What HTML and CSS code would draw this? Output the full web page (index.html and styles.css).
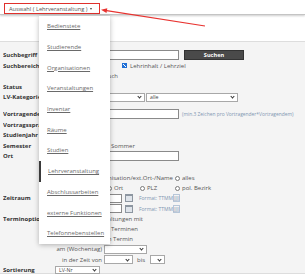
FILE: index.html
```html
<!DOCTYPE html>
<html>

<head>
    <link rel="stylesheet" href="styles.css">
</head>

<body>
    <div class="topbar">
        <div class="auswahl">Auswahl ( Lehrveranstaltung ) <span class="caret"></span></div>
    </div>

    <div class="panel">
        <div class="row">
            <div class="label">Suchbegriff</div>
            <div class="value">
                <span class="input w124"></span>
                <button class="btn">Suchen</button>
            </div>
        </div>
        <div class="row">
            <div class="label">Suchbereich</div>
            <div class="value">
                <span class="opt w67"><input type="checkbox" checked></span>
                <span class="opt"><input type="checkbox" checked>Lehrinhalt / Lehrziel</span>
            </div>
        </div>
        <div class="row">
            <div class="label"></div>
            <div class="value end w63">
                <span class="opt">Englisch</span>
            </div>
        </div>
        <div class="row">
            <div class="label">Status</div>
            <div class="value"><span class="select w45"></span></div>
        </div>
        <div class="row">
            <div class="label">LV-Kategorie</div>
            <div class="value">
                <span class="select w90"></span>
                <span class="select w92 ml1">alle</span>
            </div>
        </div>

        <div class="spacer s1"></div>

        <div class="row">
            <div class="label">Vortragende</div>
            <div class="value">
                <span class="input w124"></span>
                <span class="hint">(min.3 Zeichen pro Vortragender*Vortragendem)</span>
            </div>
        </div>
        <div class="row">
            <div class="label">Vortragssprache</div>
            <div class="value"><span class="select w45"></span></div>
        </div>
        <div class="row">
            <div class="label">Studienjahr</div>
            <div class="value"><span class="select w45"></span></div>
        </div>
        <div class="row">
            <div class="label">Semester</div>
            <div class="value">
                <span class="opt w50"><input type="radio"></span>
                <span class="opt"><input type="radio" class="tight">Sommer</span>
            </div>
        </div>
        <div class="row">
            <div class="label">Ort</div>
            <div class="value"><span class="input w124"></span></div>
        </div>

        <div class="spacer s2"></div>

        <div class="row small">
            <div class="label"></div>
            <div class="value places">
                <span class="opt first">Organisation/ext.Ort-/Name</span>
                <span class="opt"><input type="radio">alles</span>
            </div>
        </div>
        <div class="row small">
            <div class="label"></div>
            <div class="value places">
                <span class="opt"><input type="radio"></span>
                <span class="opt"><input type="radio">Ort</span>
                <span class="opt"><input type="radio">PLZ</span>
                <span class="opt"><input type="radio">pol. Bezirk</span>
            </div>
        </div>
        <div class="row small">
            <div class="label">Zeitraum</div>
            <div class="value">
                <span class="input date"></span>
                <span class="cal"></span>
                <span class="hint fmt">Format: TTMM<u>JJJJ</u></span>
            </div>
        </div>
        <div class="row small">
            <div class="label"></div>
            <div class="value">
                <span class="input date"></span>
                <span class="cal"></span>
                <span class="hint fmt">Format: TTMM<u>JJJJ</u></span>
            </div>
        </div>
        <div class="row small">
            <div class="label">Terminoptionen</div>
            <div class="value end w88">Lehrveranstaltungen mit</div>
        </div>
        <div class="row small">
            <div class="label"></div>
            <div class="value end w83"><span class="opt">allen Terminen</span></div>
        </div>
        <div class="row small">
            <div class="label"></div>
            <div class="value end w78"><span class="opt"><input type="radio" class="gap">einem Termin</span></div>
        </div>
        <div class="row small">
            <div class="label"></div>
            <div class="value">
                <span class="sublabel">am (Wochentag)</span>
                <span class="select w43"></span>
            </div>
        </div>
        <div class="row small">
            <div class="label"></div>
            <div class="value">
                <span class="sublabel">in der Zeit von</span>
                <span class="select w29"></span>
                <span class="bis">bis</span>
                <span class="select w15"></span>
            </div>
        </div>
        <div class="row small">
            <div class="label">Sortierung</div>
            <div class="value"><span class="select w45 short">LV-Nr</span></div>
        </div>
    </div>

    <div class="menu">
        <a href="#">Bedienstete</a>
        <a href="#">Studierende</a>
        <a href="#">Organisationen</a>
        <a href="#">Veranstaltungen</a>
        <a href="#">Inventar</a>
        <a href="#">Räume</a>
        <a href="#">Studien</a>
        <a href="#" class="active">Lehrveranstaltung</a>
        <a href="#">Abschlussarbeiten</a>
        <a href="#">externe Funktionen</a>
        <a href="#">Telefonnebenstellen</a>
    </div>

    <svg class="pointer" width="305" height="40" viewBox="0 0 305 40">
        <line x1="205" y1="26" x2="105" y2="10.3" stroke="#e8322f" stroke-width="1.2" />
        <polygon points="101,9.7 107.3,8.2 106.5,13.1" fill="#e8322f" />
    </svg>
</body>

</html>
```

FILE: styles.css
```css
body {
    margin: 0;
    width: 305px;
    height: 280px;
    overflow: hidden;
    position: relative;
    background-color: #ffffff;
    font-family: "Open Sans", "Liberation Sans", sans-serif;
    font-size: 6px;
    color: #555555;
}

.topbar {
    height: 15px;
    padding: 3px 0 0 4px;
    box-sizing: border-box;
    border-bottom: 1px solid #c4c4c4;
    box-shadow: 0 1px 2px rgba(0, 0, 0, 0.2);
}

.auswahl {
    display: flex;
    align-items: center;
    width: 96px;
    height: 11px;
    box-sizing: border-box;
    padding-left: 4px;
    border: 1.5px solid #e0302c;
    font-size: 5.7px;
    color: #555555;
    white-space: nowrap;
}

.caret {
    margin-left: 3px;
    border-left: 1.5px solid transparent;
    border-right: 1.5px solid transparent;
    border-top: 2px solid #444444;
}

.panel {
    margin-top: 26px;
    padding: 8px 0 0 3px;
    height: 233px;
    box-sizing: border-box;
    background-color: #f4f4f4;
    border-top: 1px solid #dddddd;
    border-bottom: 1px solid #dddddd;
}

.row {
    display: flex;
    align-items: center;
    height: 10.5px;
}

.row.small {
    height: 10.2px;
}

.spacer.s1 {
    height: 6.5px;
}

.spacer.s2 {
    height: 11.5px;
}

.label {
    width: 52px;
    flex: none;
    overflow: hidden;
    font-weight: 700;
    color: #333333;
    white-space: nowrap;
}

.value {
    display: flex;
    align-items: center;
    white-space: nowrap;
}

.value.end {
    justify-content: flex-end;
}

.w63 { width: 63px; }
.w78 { width: 78px; }
.w83 { width: 83px; }
.w88 { width: 88px; }

.input {
    display: inline-block;
    height: 10px;
    box-sizing: border-box;
    border: 1px solid #8a8a8a;
    background-color: #ffffff;
}

.input.w124 {
    width: 124px;
}

.input.date {
    width: 67px;
    height: 9px;
}

.btn {
    width: 60px;
    height: 10px;
    margin-left: 5px;
    padding: 0;
    border: 1px solid #333333;
    background-color: #4a4a4a;
    color: #ffffff;
    font-family: inherit;
    font-size: 5.6px;
    font-weight: 700;
    line-height: 8px;
}

.opt {
    display: flex;
    align-items: center;
}

.opt.w67 { width: 67px; }
.opt.w50 { width: 50px; }

input[type="checkbox"],
input[type="radio"] {
    appearance: none;
    width: 5px;
    height: 5px;
    margin: 0 3px 0 0;
    box-sizing: border-box;
    border: 0.8px solid #7a7a7a;
    background-color: #ffffff;
    flex: none;
}

input[type="radio"] {
    border-radius: 50%;
    margin-right: 2px;
}

input[type="radio"].tight {
    margin-right: 1px;
}

input[type="radio"].gap {
    margin-right: 48px;
}

input[type="checkbox"]:checked {
    border-color: #1f6fd6;
    background-color: #1f6fd6;
    background-image: linear-gradient(45deg, transparent 40%, #ffffff 40%, #ffffff 55%, transparent 55%);
}

.select {
    display: flex;
    align-items: center;
    justify-content: space-between;
    height: 9px;
    box-sizing: border-box;
    padding: 0 3px 0 3px;
    border: 1px solid #a8a8a8;
    background-color: #ffffff;
    font-size: 5.2px;
    color: #444444;
}

.select::after {
    content: "";
    margin-left: auto;
    width: 2px;
    height: 2px;
    margin-bottom: 1px;
    border-right: 1px solid #333333;
    border-bottom: 1px solid #333333;
    transform: rotate(45deg);
}

.select.short {
    height: 8px;
}

.w15 { width: 15px; }
.w29 { width: 29px; }
.w43 { width: 43px; }
.w45 { width: 45px; }
.w90 { width: 90px; }
.w92 { width: 92px; }

.ml1 {
    margin-left: 1px;
}

.hint {
    margin-left: 3px;
    font-size: 4.9px;
    color: #7f96b2;
}

.hint.fmt {
    margin-left: 6px;
    font-size: 5px;
}

.hint u {
    text-decoration: none;
    border: 0.5px solid #b7c6d8;
}

.cal {
    width: 8px;
    height: 8px;
    margin-left: 3px;
    box-sizing: border-box;
    border: 1px solid #8d96a0;
    border-top-width: 2px;
    background-color: #dfe4ea;
}

.places {
    display: grid;
    grid-template-columns: 52px 33px 35px auto;
}

.places .first {
    grid-column: span 3;
    justify-self: end;
    margin-right: 2px;
}

.sublabel {
    width: 47px;
    margin-right: 2px;
    text-align: right;
}

.bis {
    margin: 0 5px 0 4px;
}

.menu {
    position: absolute;
    left: 39px;
    top: 16px;
    width: 71px;
    background-color: #ffffff;
    box-shadow: 0 1px 5px rgba(0, 0, 0, 0.28);
}

.menu a {
    display: flex;
    align-items: center;
    height: 20.7px;
    padding-left: 8px;
    color: #6a6a6a;
    font-size: 6px;
    white-space: nowrap;
}

.menu a.active {
    padding-left: 7px;
    border-left: 2px solid #3a3a3a;
}

.pointer {
    position: absolute;
    left: 0;
    top: 0;
    pointer-events: none;
}
```
